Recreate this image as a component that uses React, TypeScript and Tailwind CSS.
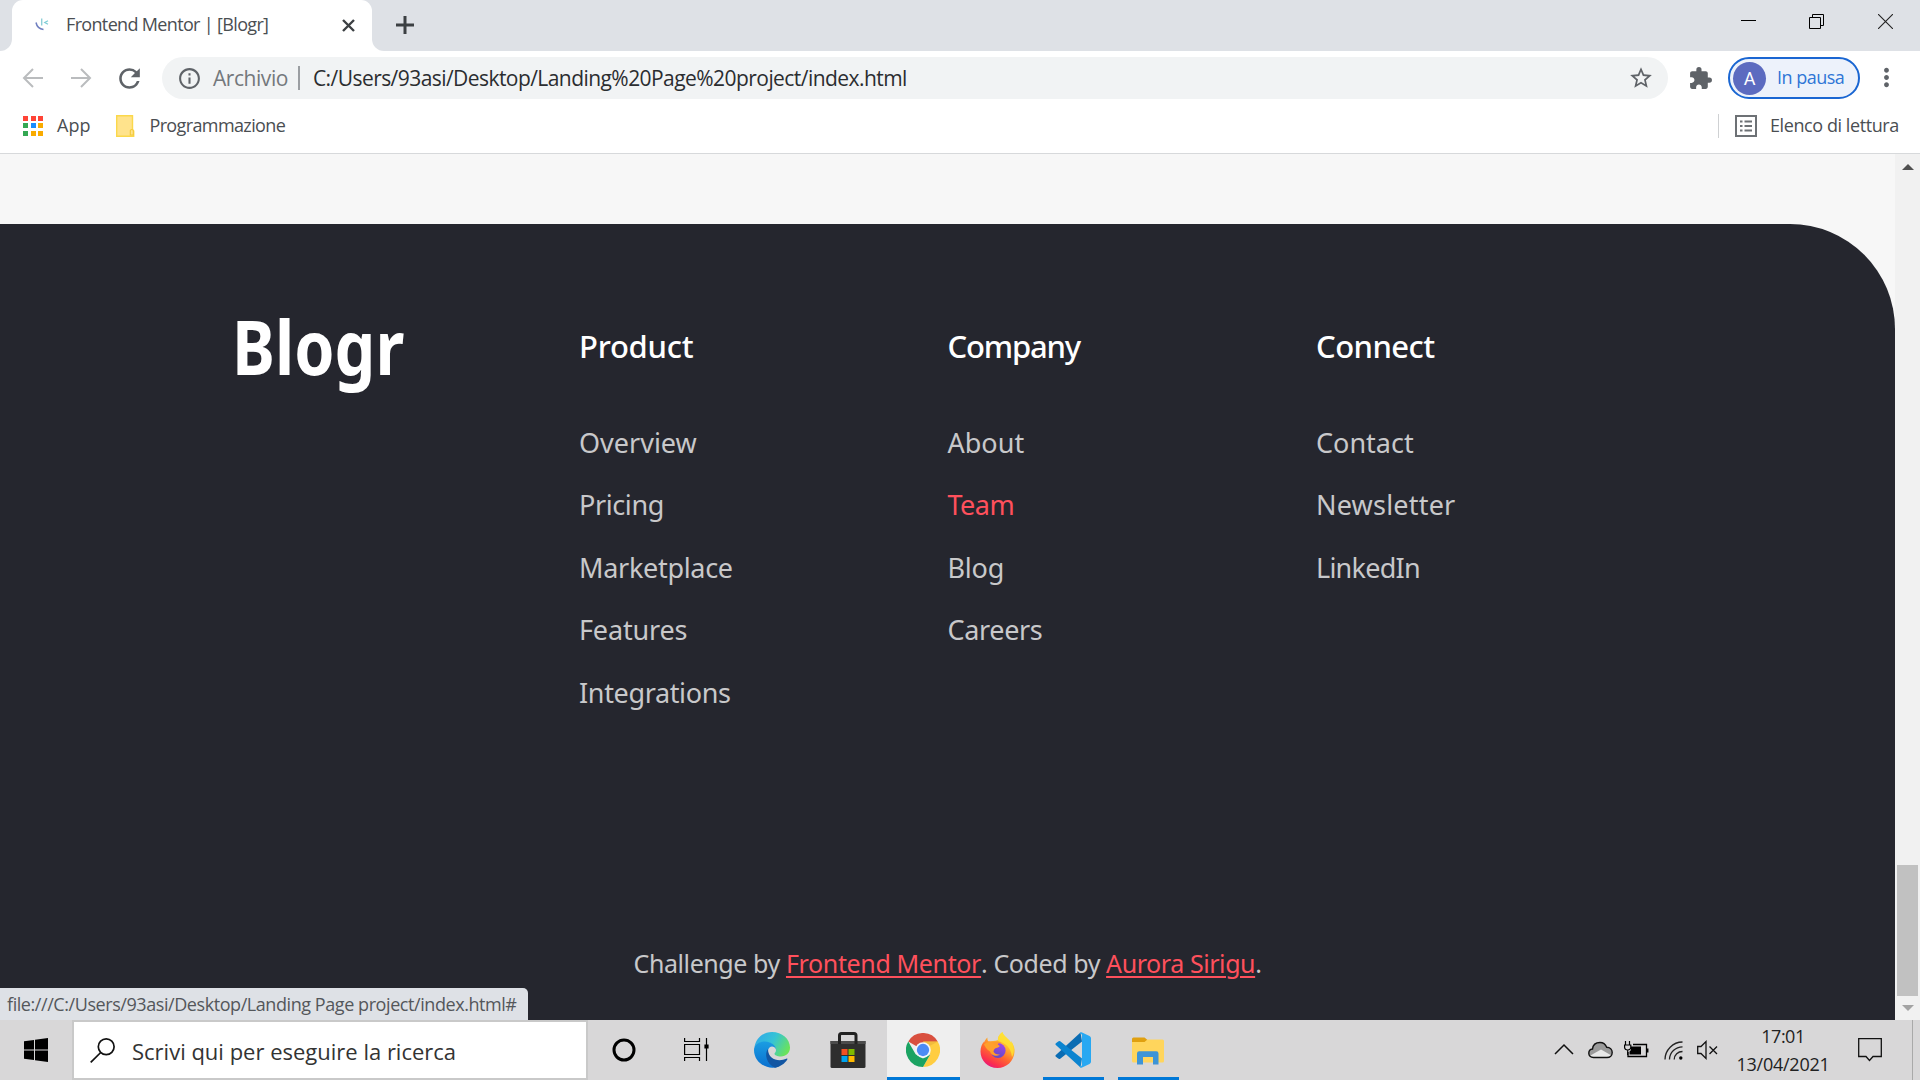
import type { ReactNode } from "react";
import { MdExtension, MdInfoOutline, MdMoreVert, MdRefresh, MdStarBorder } from "react-icons/md";

type LinkItem = { label: string; cls?: string };
type Column = { title: string; titleCls: string; links: LinkItem[] };

const columns: Column[] = [
  {
    title: "Product",
    titleCls: "tracking-[-0.25px]",
    links: [
      { label: "Overview" },
      { label: "Pricing", cls: "tracking-[-0.4px]" },
      { label: "Marketplace", cls: "tracking-[-0.3px]" },
      { label: "Features", cls: "tracking-[-0.15px]" },
      { label: "Integrations", cls: "tracking-[-0.35px]" },
    ],
  },
  {
    title: "Company",
    titleCls: "tracking-[-1.200px]",
    links: [
      { label: "About" },
      { label: "Team", cls: "text-[#ff505c] tracking-[-0.5px]" },
      { label: "Blog", cls: "tracking-[-0.2px]" },
      { label: "Careers", cls: "tracking-[-0.35px]" },
    ],
  },
  {
    title: "Connect",
    titleCls: "tracking-[-0.55px]",
    links: [
      { label: "Contact" },
      { label: "Newsletter", cls: "tracking-[0.2px]" },
      { label: "LinkedIn", cls: "tracking-[-0.75px]" },
    ],
  },
];

function TabStrip() {
  return (
    <div className="flex h-[51px] shrink-0 items-stretch bg-[#dee1e6]">
      <div className="flex w-3 items-end bg-white">
        <div className="h-full w-3 rounded-br-[12px] bg-[#dee1e6]" />
      </div>
      <div className="bg-[#dee1e6]">
        <div className="flex h-[51px] w-[360px] items-center rounded-t-[11px] bg-white pb-[3px] pl-[23px] pr-[17px]">
          <svg width="14" height="14" viewBox="0 0 14 14" fill="none" className="mt-px">
            <path d="M1 4.5C1.800 8.500 4.500 11 8.500 11.600" stroke="#6f7fc0" strokeWidth="1.500" />
            <path d="M6.700 0.500V7.500" stroke="#8fd0d8" strokeWidth="1.400" />
            <path d="M13 2.800L9.800 4.500L13 6.200" stroke="#7fcdd6" strokeWidth="1.300" />
          </svg>
          <span className="ml-[17px] text-[18px] leading-6 tracking-[-0.66px] text-[#4a4e52]">Frontend Mentor | [Blogr]</span>
          <svg width="13" height="13" viewBox="0 0 13 13" className="ml-auto mt-[3px]">
            <path d="M1 1L12 12M12 1L1 12" stroke="#3c4043" strokeWidth="2.400" />
          </svg>
        </div>
      </div>
      <div className="flex grow bg-white">
        <div className="flex grow items-center rounded-bl-[12px] bg-[#dee1e6] pl-[24px] pr-[27px]">
          <svg width="18" height="18" viewBox="0 0 18 18" className="mb-px">
            <path d="M9 0V18M0 9H18" stroke="#3c4043" strokeWidth="3" />
          </svg>
          <div className="mb-2 ml-auto flex items-center">
            <svg width="15" height="15" viewBox="0 0 15 15">
              <path d="M0 6.500H15" stroke="#000" />
            </svg>
            <svg width="15" height="15" viewBox="0 0 15 15" fill="none" stroke="#000" className="ml-[53px]">
              <path d="M0.500 3.500H11.500V14.500H0.500ZM3.500 3.500V0.500H14.500V11.500H11.500" />
            </svg>
            <svg width="15" height="15" viewBox="0 0 15 15" className="ml-[54px]">
              <path d="M0 0L15 15M15 0L0 15" stroke="#222" strokeWidth="1.100" />
            </svg>
          </div>
        </div>
      </div>
    </div>
  );
}

function Toolbar() {
  return (
    <div className="flex h-[54px] shrink-0 items-center pl-[22px] pr-[19px]">
      <svg width="22" height="20" viewBox="0 0 22 20" fill="none" stroke="#babcbe" strokeWidth="2">
        <path d="M21 10H2M11 1L2 10L11 19" />
      </svg>
      <svg width="22" height="20" viewBox="0 0 22 20" fill="none" stroke="#babcbe" strokeWidth="2" className="ml-[27px]">
        <path d="M0 10H19M10 1L19 10L10 19" />
      </svg>
      <MdRefresh className="ml-[21px] size-[31px] text-[#5f6368]" />
      <div className="ml-[17px] flex h-[42px] w-[1506px] items-center rounded-full bg-[#f1f3f4] pl-[15px] pr-[14px]">
        <MdInfoOutline className="size-[25px] text-[#5f6368]" />
        <span className="ml-[11px] text-[21px] leading-7 tracking-[-0.45px] text-[#74787c]">Archivio</span>
        <span className="ml-[10px] h-6 w-[2px] bg-[#9b9ea2]" />
        <span className="ml-[13px] text-[21px] leading-7 tracking-[-0.56px] text-[#2b2d30]">
          C:/Users/93asi/Desktop/Landing%20Page%20project/index.html
        </span>
        <MdStarBorder className="ml-auto size-[26px] text-[#5f6368]" />
      </div>
      <MdExtension className="ml-5 size-[25px] text-[#5f6368]" />
      <div className="ml-[15px] flex h-[42px] w-[132px] items-center rounded-full border-2 border-[#1a66d2] bg-[#edf2fb] pl-[3px]">
        <span className="flex size-[33px] items-center justify-center rounded-full bg-[#5c6bc0] font-[Roboto] text-[18px] text-white">A</span>
        <span className="ml-[11px] mb-[3px] whitespace-nowrap text-[18px] leading-6 tracking-[-0.5px] text-[#2f76d6]">In pausa</span>
      </div>
      <MdMoreVert className="mb-px ml-auto size-[29px] shrink-0 text-[#5f6368]" />
    </div>
  );
}

const appColors = [
  "bg-[#ff4436]", "bg-[#ff4436]", "bg-[#ff4436]",
  "bg-[#34a853]", "bg-[#1a8cff]", "bg-[#f9ab00]",
  "bg-[#34a853]", "bg-[#f9ab00]", "bg-[#f9ab00]",
];

function Bookmarks() {
  return (
    <div className="flex h-[49px] shrink-0 items-center border-b border-[#d7d9db] pb-[7px] pl-[23px] pr-[20px] text-[18px] leading-6 text-[#4a4e52]">
      <div className="grid grid-cols-3 gap-[2.500px]">
        {appColors.map((c, i) => (
          <span key={i} className={`size-[5px] ${c}`} />
        ))}
      </div>
      <span className="mb-px ml-[14px]">App</span>
      <svg width="19" height="22" viewBox="0 0 19 22" className="ml-[26px]">
        <path d="M0.700 0.700H16.500V14.500L17.700 16V21.300H0.700Z" fill="#ffe38c" stroke="#fbd84b" strokeWidth="1.400" />
        <path d="M14.300 20V15.500Q15.800 13.500 17.300 15.500V20Z" fill="#ffe38c" stroke="#f4c93a" strokeWidth="1.100" />
      </svg>
      <span className="mb-px ml-[14px] tracking-[-0.62px]">Programmazione</span>
      <span className="ml-auto h-6 w-px bg-[#cfd1d3]" />
      <svg width="22" height="22" viewBox="0 0 22 22" fill="none" stroke="#6d7175" className="ml-4">
        <rect x="1" y="1" width="20" height="20" strokeWidth="2" />
        <path d="M5 6.500H7.500M9.500 6.500H17M5 11H7.500M9.500 11H17M5 15.500H7.500M9.500 15.500H17" strokeWidth="2" />
      </svg>
      <span className="mb-px ml-[13px] w-[130px] whitespace-nowrap tracking-[-0.42px]">Elenco di lettura</span>
    </div>
  );
}

function FooterColumn({ title, titleCls, links }: Column) {
  return (
    <div className="w-[368.5px] whitespace-nowrap">
      <h2 className={`mb-[35px] text-[31px] font-medium leading-[62px] text-white ${titleCls}`}>{title}</h2>
      <ul className="text-[27px] leading-[62.4px] text-[#c8c8ca]">
        {links.map((l) => (
          <li key={l.label} className={l.cls ?? ""}>{l.label}</li>
        ))}
      </ul>
    </div>
  );
}

function Page() {
  return (
    <div className="relative flex h-[866px] shrink-0 bg-[#f7f7f7]">
      <footer className="mt-[70px] flex w-[1895px] flex-col rounded-tr-[105px] bg-[#25262e] font-['Noto_Sans',sans-serif]">
        <div className="flex pl-[232px] pt-[91px]">
          <div className="w-[347px]">
            <span className="-mt-px block w-[206px] origin-left scale-x-[0.85] text-[76px] font-bold leading-[64px] text-white">
              Blogr
            </span>
          </div>
          {columns.map((c) => (
            <FooterColumn key={c.title} {...c} />
          ))}
        </div>
        <p className="mb-[40px] mt-auto text-center text-[25px] leading-[34px] tracking-[-0.42px] text-[#c8c8ca]">
          Challenge by{" "}
          <span className="tracking-[-0.36px] text-[#ff505c] underline decoration-2 underline-offset-[3px]">Frontend Mentor</span>. Coded by{" "}
          <span className="text-[#ff505c] underline decoration-2 underline-offset-[3px]">Aurora Sirigu</span>.
        </p>
      </footer>
      <div className="flex w-[25px] flex-col items-center bg-[#f1f1f1]">
        <svg width="12" height="6" viewBox="0 0 12 6" className="mt-[10px] shrink-0">
          <path d="M6 0L12 6H0Z" fill="#505050" />
        </svg>
        <div className="mt-[695px] h-[131px] w-[21px] shrink-0 bg-[#c1c1c1]" />
        <svg width="12" height="6" viewBox="0 0 12 6" className="mt-[9px] shrink-0">
          <path d="M0 0H12L6 6Z" fill="#a3a3a3" />
        </svg>
      </div>
      <div className="absolute bottom-0 left-0 flex h-8 w-[528px] items-center whitespace-nowrap rounded-tr-[5px] bg-[#dee1e6] pl-[7px] text-[18px] leading-6 tracking-[-0.43px] text-[#54575b]">
        file:///C:/Users/93asi/Desktop/Landing Page project/index.html#
      </div>
    </div>
  );
}

function EdgeIcon() {
  return (
    <svg width="36" height="36" viewBox="0 0 36 36">
      <defs>
        <linearGradient id="edgeTop" x1="0" y1="0.200" x2="1" y2="0.600">
          <stop offset="0" stopColor="#2fa9e8" />
          <stop offset="0.500" stopColor="#35c3d6" />
          <stop offset="1" stopColor="#6be35a" />
        </linearGradient>
        <linearGradient id="edgeLeft" x1="0.500" y1="0" x2="0.500" y2="1">
          <stop offset="0" stopColor="#1b9de2" />
          <stop offset="1" stopColor="#0a6fcf" />
        </linearGradient>
      </defs>
      <path d="M0.500 15C2 6 9 0 18 0C28 0 36 7 36 15.500C36 21 32 24.500 27 24.500C23 24.500 20.500 23 20.500 21.800C20.500 20.800 22 20.300 22 18C22 14 17 10 11 10C6 10 2.500 12 0.500 15Z" fill="url(#edgeTop)" />
      <path d="M0 18C0 12.500 5 9.500 11 9.500C17 9.500 22 13.500 22 17.500C21 14.500 17.500 13.500 15.500 15.500C13 18 13 24 17 29C19 31.500 22 34 25 34.500C14 39 0 31 0 18Z" fill="url(#edgeLeft)" />
      <path d="M14 17C10 22 12.500 32 21 35.700C26 35 31 31.500 33.300 27.500C33.700 26.700 33 26.400 32.300 26.800C25 30 14 28 14 17Z" fill="#1256a3" />
    </svg>
  );
}

function StoreIcon() {
  return (
    <svg width="36" height="36" viewBox="0 0 36 36">
      <path d="M9.500 11V3.500Q9.500 1.500 11.500 1.500H24Q26 1.500 26 3.500V11" fill="none" stroke="#222" strokeWidth="3" />
      <path d="M0.500 9H35.500V34.500Q35.500 36 34 36H2Q0.500 36 0.500 34.500Z" fill="#2e2e2e" />
      <path d="M0.500 9H35.500V12H0.500Z" fill="#4b4b4b" />
      <path d="M9.500 9V12M26 9V12" stroke="#222" strokeWidth="3" />
      <path d="M11.500 17H17.500V23H11.500Z" fill="#f25022" />
      <path d="M18.500 17H24.500V23H18.500Z" fill="#7fba00" />
      <path d="M11.500 24H17.500V30H11.500Z" fill="#00a4ef" />
      <path d="M18.500 24H24.500V30H18.500Z" fill="#ffb900" />
    </svg>
  );
}

function ChromeIcon() {
  return (
    <svg width="34" height="34" viewBox="0 0 48 48">
      <path d="M24 24L3.200 12A24 24 0 0 1 44.800 12Z" fill="#d9503f" />
      <path d="M24 12H44.800A24 24 0 0 1 24 48L34.400 30Z" fill="#ffcd41" />
      <path d="M3.200 12L13.600 30L24 36L34.400 30L24 48A24 24 0 0 1 3.200 12Z" fill="#1ba362" />
      <path d="M24 12H45L34 18Z" fill="#e3a93a" opacity="0.500" />
      <circle cx="24" cy="24" r="11" fill="#f3f5f8" />
      <circle cx="24" cy="24" r="8.700" fill="#4c8bf5" />
    </svg>
  );
}

function FirefoxIcon() {
  return (
    <svg width="35" height="36" viewBox="0 0 35 36">
      <defs>
        <linearGradient id="ffBody" x1="0.800" y1="0" x2="0.250" y2="1">
          <stop offset="0" stopColor="#fff44f" />
          <stop offset="0.350" stopColor="#ffb42e" />
          <stop offset="0.600" stopColor="#ff6a2f" />
          <stop offset="0.850" stopColor="#fb2f4d" />
          <stop offset="1" stopColor="#e31587" />
        </linearGradient>
        <linearGradient id="ffGlobe" x1="0.700" y1="0" x2="0.300" y2="1">
          <stop offset="0" stopColor="#a246e8" />
          <stop offset="1" stopColor="#5b4bc4" />
        </linearGradient>
      </defs>
      <path d="M18 8C17.500 5 20 1.500 22.500 0C23 4 29.500 7 31.500 11.500L31 9C34 13 35 17 34.500 20C34 29 26.500 36 17.500 36C8 36 0.500 28.500 0.500 19.500C0.500 15 2 12 4 9.500L3.800 11C4.500 9 6 6.500 7.500 5.500C7.300 7 7.500 8.500 8.300 9.300C11 9 15 9.200 18 8Z" fill="url(#ffBody)" />
      <path d="M22.500 0C23 4 29.500 7 31.500 11.500L31 9C35 15 34.500 21 32 25C31 15 25 11 18 9C17.500 5 20 1.500 22.500 0Z" fill="#ffe033" opacity="0.850" />
      <circle cx="18" cy="18.500" r="7.600" fill="url(#ffGlobe)" />
      <path d="M12.500 10.500Q17 8.200 21.500 10.800Q18 11 17.800 12.500Q21 14 17.500 15.300Q14 16 13.500 19.500Q15 23 20 22.500Q16 25 12 22.500Q9 20 9.500 15.500Q10 12.500 12.500 10.500Z" fill="#ff9b2b" />
      <path d="M4 12.500Q8 8.500 12.500 11Q15 14.500 20 13.800Q19 15.800 16 16Q13 17 13 19.500Q8 20.500 4 12.500Z" fill="#ffa02c" />
    </svg>
  );
}

function VsCodeIcon() {
  return (
    <svg width="36" height="36" viewBox="0 0 36 36">
      <path d="M0.600 23.200L25.500 0.500L27 9.500L5.200 26.700Q4.200 27.500 3.200 26.600L0.900 24.700Q0 24 0.600 23.200Z" fill="#0a6cb3" />
      <path d="M0.600 12.800L25.500 35.500L27 26.500L5.200 9.300Q4.200 8.500 3.200 9.400L0.900 11.300Q0 12 0.600 12.800Z" fill="#0b84d0" />
      <path d="M26.500 0.200L34.500 4Q36 4.800 36 6.300V29.700Q36 31.200 34.500 32L26.500 35.800Q25 36 24.500 34.500Q27 35 27 32.500V3.500Q27 1 24.500 1.500Q25 0 26.500 0.200Z" fill="#28a8f2" />
    </svg>
  );
}

function ExplorerIcon() {
  return (
    <svg width="32" height="28" viewBox="0 0 32 28">
      <path d="M0 2Q0 0.500 1.500 0.500H12.500L15.500 3H30.500V8H0Z" fill="#e0a010" />
      <path d="M0 5H12.500L15.500 2.500H30.500Q32 2.500 32 4V24Q32 25.500 30.500 25.500H1.500Q0 25.500 0 24Z" fill="#ffd55c" />
      <path d="M5 27.500V16.500Q5 14.300 7.200 14.300H24.300Q26.500 14.300 26.500 16.500V27.500H21V20H11V27.500Z" fill="#3d94d6" />
    </svg>
  );
}

function TaskButton({ children, className }: { children: ReactNode; className: string }) {
  return <div className={`flex shrink-0 flex-col items-center ${className}`}>{children}</div>;
}

function Taskbar() {
  return (
    <div className="flex h-[60px] shrink-0 bg-[#d8d7d8]">
      <div className="flex w-[72px] items-center justify-center">
        <svg width="24" height="24" viewBox="0 0 24 24">
          <path d="M0 3.300L10 1.900V11.400H0ZM11 1.700L24 0V11.400H11ZM0 12.500H10V22.100L0 20.700ZM11 12.500H24V24L11 22.300Z" />
        </svg>
      </div>
      <div className="flex w-[516px] shrink-0 items-center border-2 border-[#c9c9c9] bg-white pl-[16px]">
        <svg width="25" height="25" viewBox="0 0 25 25" fill="none" stroke="#111" strokeWidth="1.700">
          <circle cx="16.200" cy="8.800" r="7.900" />
          <path d="M10.700 14.500L0.700 24.300" />
        </svg>
        <span className="ml-[17px] mt-px text-[22px] leading-7 text-[#333]">Scrivi qui per eseguire la ricerca</span>
      </div>
      <TaskButton className="w-[72px] pt-[18px]">
        <svg width="24" height="24" viewBox="0 0 24 24" fill="none">
          <circle cx="12" cy="12" r="10" stroke="#000" strokeWidth="3" />
        </svg>
      </TaskButton>
      <TaskButton className="w-[73px] pt-[18px]">
        <svg width="25" height="24" viewBox="0 0 25 24" fill="none" stroke="#000" strokeWidth="1.200">
          <path d="M0.600 0V3.500H15.500V0M0.600 6.500H15.500V16.500H0.600ZM0.600 23V19.500H15.500V23M22.500 0V23" />
          <path d="M21 7H24V10H21Z" fill="#000" />
        </svg>
      </TaskButton>
      <TaskButton className="w-[78px] pt-[12px]"><EdgeIcon /></TaskButton>
      <TaskButton className="mr-[3px] w-[73px] pt-[12px]"><StoreIcon /></TaskButton>
      <TaskButton className="w-[73px] border-b-[3px] border-[#0078d7] bg-[#efefef] pr-px pt-[13px]"><ChromeIcon /></TaskButton>
      <TaskButton className="w-[76px] pr-px pt-[12px]"><FirefoxIcon /></TaskButton>
      <TaskButton className="ml-[7px] w-[61px] border-b-[3px] border-[#0078d7] pr-[2px] pt-[12px]"><VsCodeIcon /></TaskButton>
      <TaskButton className="ml-[14px] w-[61px] border-b-[3px] border-[#0078d7] pr-[2px] pt-[17px]"><ExplorerIcon /></TaskButton>

      <div className="ml-auto flex items-center">
        <svg width="20" height="24" viewBox="0 0 20 24" fill="none" stroke="#111" strokeWidth="1.500">
          <path d="M1 16L10 7L19 16" />
        </svg>
        <svg width="25" height="24" viewBox="0 0 25 24" className="ml-[14px]">
          <path d="M5.500 19.500C2.500 19.500 0.800 17.600 0.800 15.200C0.800 12.800 2.500 11.200 4.500 11C5 6.500 8.500 4.500 12 4.500C15 4.500 17.500 6.300 18.700 9.200C22 9.200 24.200 11.500 24.200 14.500C24.200 17.500 22 19.500 19 19.500Z" fill="#9a9a9a" />
          <path d="M1.500 18L13 11.500L23.500 17.500Q22 19.500 19 19.500H5.500Q2.800 19.500 1.500 18Z" fill="#e8e8e8" />
          <path d="M5.500 19.500C2.500 19.500 0.800 17.600 0.800 15.200C0.800 12.800 2.500 11.200 4.500 11C5 6.500 8.500 4.500 12 4.500C15 4.500 17.500 6.300 18.700 9.200C22 9.200 24.200 11.500 24.200 14.500C24.200 17.500 22 19.500 19 19.500Z" fill="none" stroke="#111" strokeWidth="1.400" />
        </svg>
        <svg width="25" height="24" viewBox="0 0 25 24" fill="none" stroke="#000" className="ml-[11px]">
          <path d="M9 6.500H22.500V18.500H4V14M23.800 10.500V14.500" strokeWidth="1.300" />
          <path d="M7 8.500H17V16.500H5.500V13.500L7 12Z" fill="#000" stroke="none" />
          <path d="M1.500 3V7M5.500 3V7M0.600 7H6.800V9.500Q6.500 12 3.700 12Q0.800 12 0.600 9.500ZM3.700 12V17" strokeWidth="1.200" />
        </svg>
        <svg width="20" height="24" viewBox="0 0 20 24" fill="none" stroke="#222" strokeWidth="1.300" className="ml-[15px]">
          <path d="M1 21.500C1 12 9 4 18.500 4M5.500 21.500C5.500 14.500 11.500 8.800 18.500 8.800M10.200 21.500C10.200 17 14 13.500 18.500 13.500" />
          <circle cx="16.800" cy="20" r="1.700" fill="#000" stroke="none" />
        </svg>
        <svg width="22" height="24" viewBox="0 0 22 24" fill="none" stroke="#111" strokeWidth="1.300" className="ml-[13px]">
          <path d="M0.700 8.500H4L9 3.500V20.500L4 15.500H0.700ZM12.500 8.500L20 16M20 8.500L12.500 16" />
        </svg>
        <div className="ml-[17px] flex w-[94px] flex-col items-center whitespace-nowrap text-[18px] leading-[28px] text-[#222]">
          <span className="tracking-[-0.5px]">17:01</span>
          <span className="tracking-[-0.25px]">13/04/2021</span>
        </div>
        <svg width="24" height="24" viewBox="0 0 24 24" fill="none" stroke="#111" strokeWidth="1.300" className="ml-[28px]">
          <path d="M0.700 0.700H23.300V18.500H15L11.500 22.500L8 18.500H0.700Z" />
        </svg>
        <div className="ml-[30px] mr-[7px] h-[60px] w-px bg-[#a9a9a9]" />
      </div>
    </div>
  );
}

export default function App() {
  return (
    <div className="flex h-[1080px] w-[1920px] flex-col overflow-hidden bg-white font-['Open_Sans',sans-serif]">
      <TabStrip />
      <Toolbar />
      <Bookmarks />
      <Page />
      <Taskbar />
    </div>
  );
}
